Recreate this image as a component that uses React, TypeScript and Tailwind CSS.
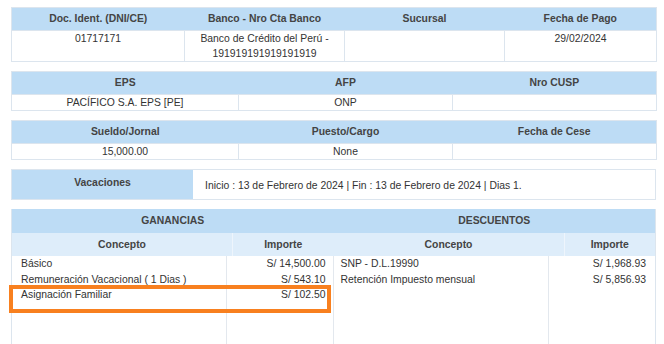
import React from 'react';

const HEAD = 'bg-[#bddcf5] text-[#444] font-bold';
const LINE = 'border-[#dce5ee]';

interface SimpleTableProps {
  cols: string[];
  headers: string[];
  values: React.ReactNode[];
}

const SimpleTable = ({ cols, headers, values }: SimpleTableProps) => {
  return (
    <table className={`w-full table-fixed border-collapse border ${LINE}`}>
      <colgroup>
        {cols.map((w, i) => (
          <col key={i} style={{ width: w }} />
        ))}
      </colgroup>
      <thead>
        <tr className={`${HEAD} h-[22px]`}>
          {headers.map((h) => (
            <th key={h} className="p-0 text-center font-bold leading-[22px]">
              {h}
            </th>
          ))}
        </tr>
      </thead>
      <tbody>
        <tr>
          {values.map((v, i) => (
            <td
              key={i}
              className={`p-0 text-center align-top leading-[15px] text-[#333] border ${LINE}`}
            >
              {v}
            </td>
          ))}
        </tr>
      </tbody>
    </table>
  );
};

interface Row {
  concepto: string;
  importe: string;
}

const ganancias: Row[] = [
  { concepto: 'Básico', importe: 'S/ 14,500.00' },
  { concepto: 'Remuneración Vacacional ( 1 Dias )', importe: 'S/ 543.10' },
  { concepto: 'Asignación Familiar', importe: 'S/ 102.50' },
];

const descuentos: Row[] = [
  { concepto: 'SNP - D.L.19990', importe: 'S/ 1,968.93' },
  { concepto: 'Retención Impuesto mensual', importe: 'S/ 5,856.93' },
];

const App = () => {
  return (
    <div
      className="w-[664px] h-[344px] overflow-hidden bg-white pl-[11px] pr-[8px] pt-[7px] text-[10.4px]"
      style={{ fontFamily: '"Liberation Sans", Arial, sans-serif' }}
    >
      <div className="flex flex-col gap-[9px]">
        <SimpleTable
          cols={['173px', '160px', '160px', '152px']}
          headers={['Doc. Ident. (DNI/CE)', 'Banco - Nro Cta Banco', 'Sucursal', 'Fecha de Pago']}
          values={[
            <div className="h-[30px]">01717171</div>,
            <>
              Banco de Crédito del Perú -<br />191919191919191919
            </>,
            '',
            '29/02/2024',
          ]}
        />

        <SimpleTable
          cols={['227px', '214px', '204px']}
          headers={['EPS', 'AFP', 'Nro CUSP']}
          values={[<div className="h-[14px]">PACÍFICO S.A. EPS [PE]</div>, 'ONP', '']}
        />

        <SimpleTable
          cols={['227px', '214px', '204px']}
          headers={['Sueldo/Jornal', 'Puesto/Cargo', 'Fecha de Cese']}
          values={[<div className="h-[14px]">15,000.00</div>, 'None', '']}
        />

        <div className={`grid grid-cols-[181px_1fr] h-[31px] border ${LINE}`}>
          <div className={`${HEAD} text-center pt-[6px] leading-[14px]`}>Vacaciones</div>
          <div className="flex items-center pl-[12px] pt-[2px] text-[#333]">
            Inicio : 13 de Febrero de 2024 | Fin : 13 de Febrero de 2024 | Dias 1.
          </div>
        </div>

        <div className={`relative grid grid-cols-2 border-l border-r ${LINE}`}>
          {/* GANANCIAS */}
          <div className="flex flex-col">
            <div className={`${HEAD} h-[24px] flex items-center justify-center`}>GANANCIAS</div>
            <div className="grid grid-cols-[221px_1fr] h-[23px] bg-[#deedfa] text-[#444] font-bold">
              <div className="flex items-center justify-center border-r border-[#eef5fc]">Concepto</div>
              <div className="flex items-center justify-center">Importe</div>
            </div>
            <div className="grid grid-cols-[215px_1fr] min-h-[100px] text-[#333] leading-[15.5px] border-r border-[#e3e8ee]">
              <div className="pl-[9px] border-r border-[#e3e8ee]">
                {ganancias.map((r) => (
                  <div key={r.concepto}>{r.concepto}</div>
                ))}
              </div>
              <div className="pr-[7px] text-right">
                {ganancias.map((r) => (
                  <div key={r.concepto}>{r.importe}</div>
                ))}
              </div>
            </div>
          </div>

          {/* DESCUENTOS */}
          <div className="flex flex-col">
            <div className={`${HEAD} h-[24px] flex items-center justify-center`}>DESCUENTOS</div>
            <div className="grid grid-cols-[231px_1fr] h-[23px] bg-[#deedfa] text-[#444] font-bold">
              <div className="flex items-center justify-center border-r border-[#eef5fc]">Concepto</div>
              <div className="flex items-center justify-center">Importe</div>
            </div>
            <div className="grid grid-cols-[215px_1fr] min-h-[100px] text-[#333] leading-[15.5px]">
              <div className="pl-[7px] border-r border-[#e3e8ee]">
                {descuentos.map((r) => (
                  <div key={r.concepto}>{r.concepto}</div>
                ))}
              </div>
              <div className="pr-[9px] text-right">
                {descuentos.map((r) => (
                  <div key={r.concepto}>{r.importe}</div>
                ))}
              </div>
            </div>
          </div>

          {/* highlight */}
          <div className="absolute left-[-3px] top-[76px] w-[322px] h-[28px] border-4 border-[#f8801f]" />
        </div>
      </div>
    </div>
  );
};

export default App;
